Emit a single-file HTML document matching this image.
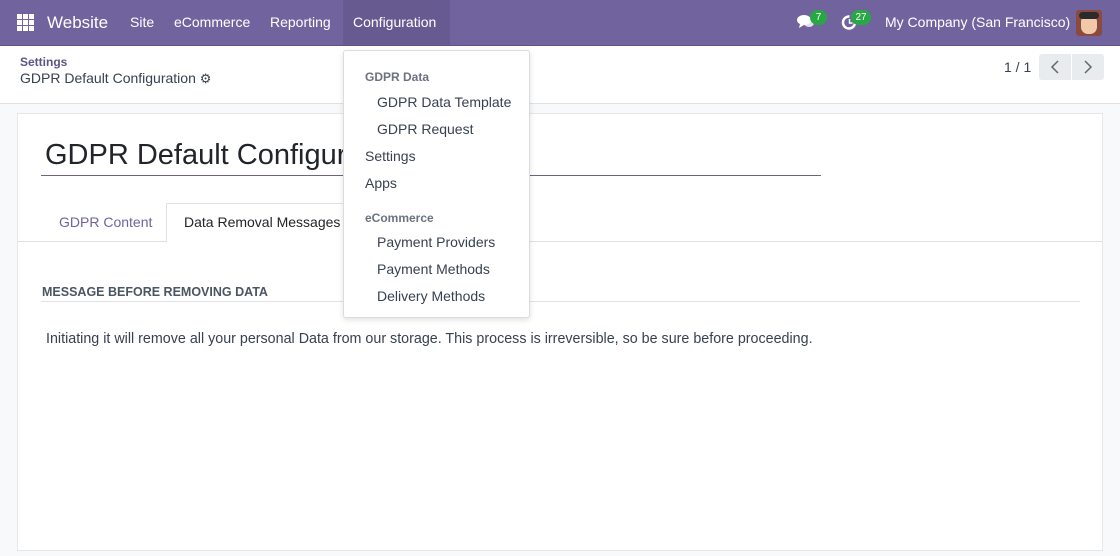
<!DOCTYPE html>
<html><head><style>
*{box-sizing:border-box;margin:0;padding:0}
body{width:1120px;height:556px;overflow:hidden;background:#f8f9fa;font-family:"Liberation Sans",sans-serif;font-size:13.5px;color:#374151;position:relative}
.nav{position:absolute;left:0;top:0;width:1120px;height:46px;background:#71639e;border-bottom:1px solid #5f5387;color:#fff}
.nav span{position:absolute;top:14px;font-size:14px}
.cp{position:absolute;left:0;top:46px;width:1120px;height:58px;background:#fff;border-bottom:1px solid #dee2e6}
.card{position:absolute;left:17px;top:113px;width:1086px;height:438px;background:#fff;border:1px solid #e5e7eb}
.dd{position:absolute;left:343px;top:50px;width:187px;height:268px;background:#fff;border:1px solid #dcdcdc;border-radius:3px;box-shadow:0 2px 6px rgba(0,0,0,.12)}
.dd div{position:absolute;font-size:14px;color:#374151}
.dd .h{font-size:12px;color:#6b7280;font-weight:bold}
.badge{position:absolute;background:#28a745;color:#fff;font-size:10px;border-radius:8px;height:15px;line-height:15px;text-align:center}
</style></head><body>
<div class="nav">
 <svg style="position:absolute;left:17px;top:14px" width="17" height="17" viewBox="0 0 17 17" fill="#fff"><rect x="0" y="0" width="5" height="5"/><rect x="6" y="0" width="5" height="5"/><rect x="12" y="0" width="5" height="5"/><rect x="0" y="6" width="5" height="5"/><rect x="6" y="6" width="5" height="5"/><rect x="12" y="6" width="5" height="5"/><rect x="0" y="12" width="5" height="5"/><rect x="6" y="12" width="5" height="5"/><rect x="12" y="12" width="5" height="5"/></svg>
 <span style="left:47px;top:13px;font-size:17px">Website</span>
 <span style="left:130px">Site</span>
 <span style="left:174px">eCommerce</span>
 <span style="left:270px">Reporting</span>
 <div style="position:absolute;left:343px;top:0;width:107px;height:45px;background:#675a91"></div>
 <span style="left:353px">Configuration</span>
 <svg style="position:absolute;left:797px;top:14px" width="18" height="16" viewBox="0 0 18 16" fill="#fff"><ellipse cx="7" cy="6" rx="7" ry="5"/><path d="M3 10 L2 14 L7 11Z"/><ellipse cx="12" cy="9" rx="5" ry="4" opacity=".8"/></svg>
 <div class="badge" style="left:810px;top:10px;width:17px">7</div>
 <svg style="position:absolute;left:841px;top:14px" width="17" height="17" viewBox="0 0 17 17" fill="none" stroke="#fff" stroke-width="2.5"><path d="M14 8.5A6 6 0 1 1 8.5 2.5"/><path d="M8.5 5v4h3" stroke-width="1.5"/></svg>
 <div class="badge" style="left:851px;top:10px;width:20px">27</div>
 <span style="left:885px">My Company (San Francisco)</span>
 <div style="position:absolute;left:1076px;top:10px;width:26px;height:26px;background:#8b4a3e;border-radius:3px;overflow:hidden"><div style="position:absolute;left:5px;top:5px;width:16px;height:19px;background:#f2c9a8;border-radius:7px"></div><div style="position:absolute;left:3px;top:2px;width:20px;height:7px;background:#2b2b2b;border-radius:4px"></div></div>
</div>
<div class="cp">
 <div style="position:absolute;left:20px;top:9px;font-size:12px;color:#5f5387;font-weight:bold">Settings</div>
 <div style="position:absolute;left:20px;top:24px;font-size:14px;color:#374151">GDPR Default Configuration <span style="font-size:13px">⚙</span></div>
 <div style="position:absolute;left:1004px;top:13px;font-size:14px">1 / 1</div>
 <div style="position:absolute;left:1039px;top:8px;width:32px;height:26px;background:#e9ecef;border-radius:3px 0 0 3px"><svg width="32" height="26" viewBox="0 0 32 26" fill="none" stroke="#666" stroke-width="1.5"><path d="M19 7l-6 6 6 6"/></svg></div>
 <div style="position:absolute;left:1072px;top:8px;width:32px;height:26px;background:#e9ecef;border-radius:0 3px 3px 0"><svg width="32" height="26" viewBox="0 0 32 26" fill="none" stroke="#666" stroke-width="1.5"><path d="M13 7l6 6-6 6"/></svg></div>
</div>
<div class="card">
 <div style="position:absolute;left:27px;top:25px;font-size:29px;color:#212529">GDPR Default Configuration</div>
 <div style="position:absolute;left:23px;top:61px;width:780px;height:1px;background:#6b6580"></div>
 <div style="position:absolute;left:0;top:127px;width:1084px;height:1px;background:#dee2e6"></div>
 <div style="position:absolute;left:41px;top:100px;font-size:14px;color:#71639e">GDPR Content</div>
 <div style="position:absolute;left:148px;top:89px;width:180px;height:39px;background:#fff;border:1px solid #dee2e6;border-bottom:none"></div>
 <div style="position:absolute;left:166px;top:100px;font-size:14px;color:#212529">Data Removal Messages</div>
 <div style="position:absolute;left:24px;top:171px;font-size:12.5px;font-weight:bold;color:#4b5563">MESSAGE BEFORE REMOVING DATA</div>
 <div style="position:absolute;left:23px;top:187px;width:1039px;height:1px;background:#dee2e6"></div>
 <div style="position:absolute;left:28px;top:217px;font-size:14.3px;color:#374151">Initiating it will remove all your personal Data from our storage. This process is irreversible, so be sure before proceeding.</div>
</div>
<div class="dd">
 <div class="h" style="left:21px;top:19px">GDPR Data</div>
 <div style="left:33px;top:43px">GDPR Data Template</div>
 <div style="left:33px;top:70px">GDPR Request</div>
 <div style="left:21px;top:97px">Settings</div>
 <div style="left:21px;top:124px">Apps</div>
 <div class="h" style="left:21px;top:160px">eCommerce</div>
 <div style="left:33px;top:183px">Payment Providers</div>
 <div style="left:33px;top:210px">Payment Methods</div>
 <div style="left:33px;top:237px">Delivery Methods</div>
</div>
</body></html>
